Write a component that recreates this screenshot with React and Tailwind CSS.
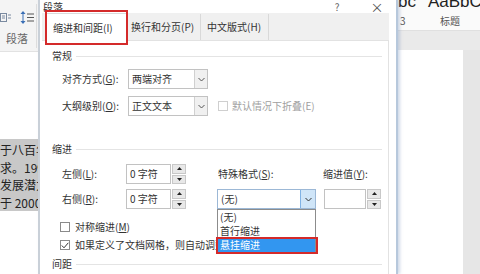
import React from "react";

function Chevron({ color = "#555" }) {
  return (
    <svg width="7" height="5" viewBox="0 0 7 5">
      <polyline points="0.5,1 3.5,4 6.5,1" fill="none" stroke={color} strokeWidth="1" />
    </svg>
  );
}

function Spinner() {
  return (
    <div className="flex flex-col w-[14px] h-[20px] gap-[1px]">
      <div className="flex-1 flex items-center justify-center bg-[#e8e8e8] border border-[#c8c8c8]">
        <svg width="5" height="3" viewBox="0 0 5 3"><polygon points="2.5,0 5,3 0,3" fill="#222" /></svg>
      </div>
      <div className="flex-1 flex items-center justify-center bg-[#e8e8e8] border border-[#c8c8c8]">
        <svg width="5" height="3" viewBox="0 0 5 3"><polygon points="0,0 5,0 2.5,3" fill="#222" /></svg>
      </div>
    </div>
  );
}

function Select({ text, w = "w-[80px]" }) {
  return (
    <div className={`${w} h-[20px] flex border border-[#c2c2c2] bg-white`}>
      <div className="flex-1 flex items-center pl-[3px] leading-none">{text}</div>
      <div className="w-[13px] flex items-center justify-center bg-[#f0f0f0] border-l border-[#d0d0d0]">
        <Chevron />
      </div>
    </div>
  );
}

function Group({ title, className = "" }) {
  return (
    <div className={`h-[16px] flex items-center pl-[10px] pr-[6px] gap-[4px] ${className}`}>
      <span className="leading-none">{title}</span>
      <div className="flex-1 h-px bg-[#e4e4e4]" />
    </div>
  );
}

function Check({ checked }) {
  return (
    <div className="w-[10px] h-[10px] border border-[#8a8a8a] bg-white flex items-center justify-center">
      {checked && (
        <svg width="8" height="7" viewBox="0 0 8 7">
          <polyline points="0.8,3.5 3,5.8 7.3,0.8" fill="none" stroke="#333" strokeWidth="1" />
        </svg>
      )}
    </div>
  );
}

function LeftBg() {
  return (
    <div className="w-[38px] shrink-0 flex flex-col bg-white">
      <div className="h-[52px] bg-[#f4f4f4] border-b border-[#e2e2e2] flex flex-col relative">
        <div className="h-[30px] flex items-center gap-[9px] pl-0 pt-[4px]">
          <svg width="11" height="11" viewBox="0 0 11 11">
            <rect x="0.5" y="1.5" width="6" height="8" fill="none" stroke="#7a8aa0" strokeWidth="1" />
            <line x1="2" y1="4" x2="5" y2="4" stroke="#7a8aa0" />
            <line x1="2" y1="6" x2="5" y2="6" stroke="#7a8aa0" />
            <line x1="8" y1="3" x2="11" y2="3" stroke="#7a8aa0" />
            <line x1="8" y1="6" x2="11" y2="6" stroke="#7a8aa0" />
          </svg>
          <svg width="16" height="13" viewBox="0 0 16 13">
            <line x1="3" y1="1.5" x2="3" y2="11.5" stroke="#3a6fb5" strokeWidth="1" />
            <polygon points="3,0 5.5,3 0.5,3" fill="#3a6fb5" />
            <polygon points="3,13 5.5,10 0.5,10" fill="#3a6fb5" />
            <line x1="7" y1="3" x2="14" y2="3" stroke="#555" />
            <line x1="7" y1="6.5" x2="14" y2="6.5" stroke="#555" />
            <line x1="7" y1="10" x2="14" y2="10" stroke="#555" />
          </svg>
        </div>
        <div className="h-[16px] flex items-center pl-[6px] text-[11px] text-[#666] leading-none">段落</div>
        <div className="absolute right-[1px] top-[4px] w-px h-[44px] bg-[#dedede]" />
      </div>
      <div className="h-[87px]" />
      <div className="h-[72px] bg-[#c8c8c8] pt-[2px] text-[12px] leading-[17.5px] text-[#222] whitespace-nowrap overflow-hidden">
        <div>于八百年</div>
        <div>求。1996</div>
        <div>发展潜力</div>
        <div>于 2000</div>
      </div>
      <div className="flex-1" />
    </div>
  );
}

function RightBg() {
  return (
    <div className="flex-1 flex flex-col bg-white">
      <div className="h-[12px] overflow-hidden bg-[#fafafa]">
        <div className="-mt-[8px] text-[17px] leading-[20px] text-[#222] font-['Liberation_Sans',sans-serif] whitespace-nowrap">
          <span>bc</span>
          <span className="ml-[12px]">AaBbC</span>
        </div>
      </div>
      <div className="h-[18px] bg-[#fafafa] flex items-center text-[10px] text-[#555] leading-none">
        <span className="pl-[2px] w-[42px]">3</span>
        <span>标题</span>
      </div>
      <div className="h-[20px] bg-[#eaeaea] border-t border-[#e0e0e0]" />
      <div className="flex-1 flex bg-[#e6e6e6]">
        <div className="w-[65px] bg-white" />
      </div>
    </div>
  );
}

function Dialog() {
  return (
    <div className="w-[360px] shrink-0 flex flex-col bg-white border-l-[2px] border-l-[#c9d0d8] border-r-[2px] border-r-[#b7c8dc] shadow-[2px_0_3px_rgba(120,150,190,0.35)] relative z-10">
      {/* title */}
      <div className="h-[17px] flex items-center text-[10px] leading-none text-[#333]">
        <span className="pl-[3px] flex-1">段落</span>
        <span className="w-[20px] text-center text-[#666]">?</span>
        <span className="w-[20px] ml-[20px] text-center text-[13px] text-[#555]">×</span>
        <span className="w-[9px]" />
      </div>
      <div className="ml-[2px] w-[347px] flex flex-col">
        {/* tabs */}
        <div className="h-[27px] bg-[#f0f0f0] flex items-end pl-[4px] text-[10px] leading-none">
          <div className="relative w-[82px] h-[28px] -mb-[1px] bg-white border-x border-t border-[#d9d9d9] flex items-center pl-[6px]">
            缩进和间距(I)
            <div className="absolute -left-[2px] -right-[1px] -top-[4px] -bottom-[4px] border-[2px] border-[#d42a2a]" />
          </div>
          <div className="w-[73px] h-[26px] flex items-center pl-[3px] border-r border-[#d9d9d9]">换行和分页(P)</div>
          <div className="w-[68px] h-[26px] flex items-center pl-[6px] border-r border-[#d9d9d9]">中文版式(H)</div>
        </div>
        {/* panel */}
        <div className="h-[240px] bg-white border-t border-r border-[#e2e2e2] text-[10px] text-[#333] flex flex-col">
          <Group title="常规" className="mt-[7px]" />
          <div className="mt-[5px] h-[20px] flex items-center pl-[20px]">
            <span className="w-[66px] leading-none">对齐方式(<u>G</u>):</span>
            <Select text="两端对齐" />
          </div>
          <div className="mt-[7px] h-[20px] flex items-center pl-[20px]">
            <span className="w-[66px] leading-none">大纲级别(<u>O</u>):</span>
            <Select text="正文文本" />
            <div className="ml-[10px] mr-[4px] w-[10px] h-[10px] border border-[#cfcfcf]" />
            <span className="text-[#a0a0a0] leading-none">默认情况下折叠(E)</span>
          </div>
          <Group title="缩进" className="mt-[25px]" />
          <div className="mt-[7px] h-[20px] flex items-center pl-[20px]">
            <span className="w-[64px] leading-none">左侧(<u>L</u>):</span>
            <div className="w-[45px] h-[20px] border border-[#c2c2c2] flex items-center pl-[3px] leading-none">0 字符</div>
            <div className="ml-[1px]"><Spinner /></div>
            <span className="ml-[32px] w-[105px] leading-none">特殊格式(<u>S</u>):</span>
            <span className="leading-none">缩进值(<u>Y</u>):</span>
          </div>
          <div className="mt-[5px] h-[20px] flex items-center pl-[20px]">
            <span className="w-[64px] leading-none">右侧(<u>R</u>):</span>
            <div className="w-[45px] h-[20px] border border-[#c2c2c2] flex items-center pl-[3px] leading-none">0 字符</div>
            <div className="ml-[1px]"><Spinner /></div>
            <div className="ml-[31px] relative w-[99px] h-[20px] flex border border-[#9cb8d6] bg-white z-20">
              <div className="flex-1 flex items-center pl-[3px] leading-none">(无)</div>
              <div className="w-[15px] flex items-center justify-center bg-[#cfe5f8] border-l border-[#7fb2e5]">
                <Chevron color="#333" />
              </div>
              <div className="absolute left-[-1px] top-[19px] w-[99px] bg-white border border-[#8c8c8c] flex flex-col leading-none">
                <div className="h-[14px] flex items-center pl-[2px]">(无)</div>
                <div className="h-[14px] flex items-center pl-[2px]">首行缩进</div>
                <div className="relative h-[14px] flex items-center pl-[2px] bg-[#3296f0] text-white">
                  悬挂缩进
                  <div className="absolute -left-[2px] -right-[3px] -top-[1px] -bottom-[2px] border-[2px] border-[#d42a2a]" />
                </div>
              </div>
            </div>
            <div className="ml-[8px] w-[42px] h-[20px] border border-[#c2c2c2]" />
            <div className="ml-[1px]"><Spinner /></div>
          </div>
          <div className="mt-[11px] h-[14px] flex items-center pl-[18px] gap-[5px] leading-none">
            <Check />
            <span>对称缩进(<u>M</u>)</span>
          </div>
          <div className="mt-[4px] h-[14px] flex items-center pl-[18px] gap-[5px] leading-none whitespace-nowrap">
            <Check checked />
            <span>如果定义了文档网格，则自动调整右缩进(<u>D</u>)</span>
          </div>
          <Group title="间距" className="mt-[4px]" />
        </div>
      </div>
    </div>
  );
}

export default function App() {
  return (
    <div className="flex w-[480px] h-[274px] overflow-hidden bg-white font-['Noto_Sans_CJK_SC',sans-serif] text-[#333]">
      <LeftBg />
      <Dialog />
      <RightBg />
    </div>
  );
}
